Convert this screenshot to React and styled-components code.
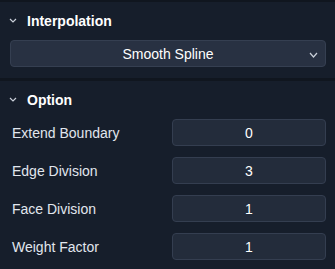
import React from "react";
import styled, { createGlobalStyle } from "styled-components";

const Global = createGlobalStyle`
  html, body { margin: 0; padding: 0; background: #161e2b; }
  body { font-family: "Liberation Sans", Arial, sans-serif; }
`;

const Panel = styled.div`
  width: 335px;
  height: 269px;
  background: #161e2b;
  border-top: 2px solid #10161f;
  box-sizing: border-box;
  overflow: hidden;
`;

const Section = styled.section`
  padding: 10px 9px ${(p) => p.$bottom || 11}px 10px;
  border-bottom: ${(p) => (p.$divider ? "3px solid #10161f" : "none")};
  display: flex;
  flex-direction: column;
`;

const Header = styled.div`
  height: 17px;
  display: flex;
  align-items: center;
  gap: 10px;
  color: #ffffff;
  font-weight: 700;
  font-size: 14px;
  margin-bottom: 11px;
`;

const Chevron = ({ w = 6, h = 3 }) => (
  <svg width={w + 2} height={h + 2} viewBox={`0 0 ${w + 2} ${h + 2}`} style={{ display: "block" }}>
    <path d={`M1 1 L${w / 2 + 1} ${h + 1} L${w + 1} 1`} fill="none" stroke="#c9cfd9" strokeWidth="1.2" />
  </svg>
);

const ChevWrap = styled.span`
  display: flex;
  margin-left: -1px;
`;

const Select = styled.div`
  position: relative;
  height: 27px;
  box-sizing: border-box;
  background: #283142;
  border: 1px solid #353f51;
  border-radius: 4px;
  display: flex;
  align-items: center;
  justify-content: center;
  color: #ffffff;
  font-size: 14px;
`;

const SelectIcon = styled.span`
  position: absolute;
  right: 7px;
  top: 11px;
  display: flex;
`;

const Rows = styled.div`
  display: flex;
  flex-direction: column;
  gap: 11px;
`;

const Row = styled.div`
  display: flex;
  align-items: center;
  justify-content: space-between;
`;

const Label = styled.span`
  color: #e1e6ee;
  font-size: 14px;
  padding-left: 2px;
`;

const Field = styled.div`
  width: 154px;
  height: 27px;
  box-sizing: border-box;
  background: #232c3b;
  border: 1px solid #343e50;
  border-radius: 4px;
  display: flex;
  align-items: center;
  justify-content: center;
  color: #ffffff;
  font-size: 14px;
`;

const rows = [
  ["Extend Boundary", "0"],
  ["Edge Division", "3"],
  ["Face Division", "1"],
  ["Weight Factor", "1"],
];

export default function App() {
  return (
    <>
      <Global />
      <Panel>
        <Section $divider>
          <Header>
            <ChevWrap><Chevron /></ChevWrap>
            Interpolation
          </Header>
          <Select>
            Smooth Spline
            <SelectIcon><Chevron w={7} h={4} /></SelectIcon>
          </Select>
        </Section>
        <Section $bottom={9}>
          <Header>
            <ChevWrap><Chevron /></ChevWrap>
            Option
          </Header>
          <Rows>
            {rows.map(([l, v]) => (
              <Row key={l}>
                <Label>{l}</Label>
                <Field>{v}</Field>
              </Row>
            ))}
          </Rows>
        </Section>
      </Panel>
    </>
  );
}
